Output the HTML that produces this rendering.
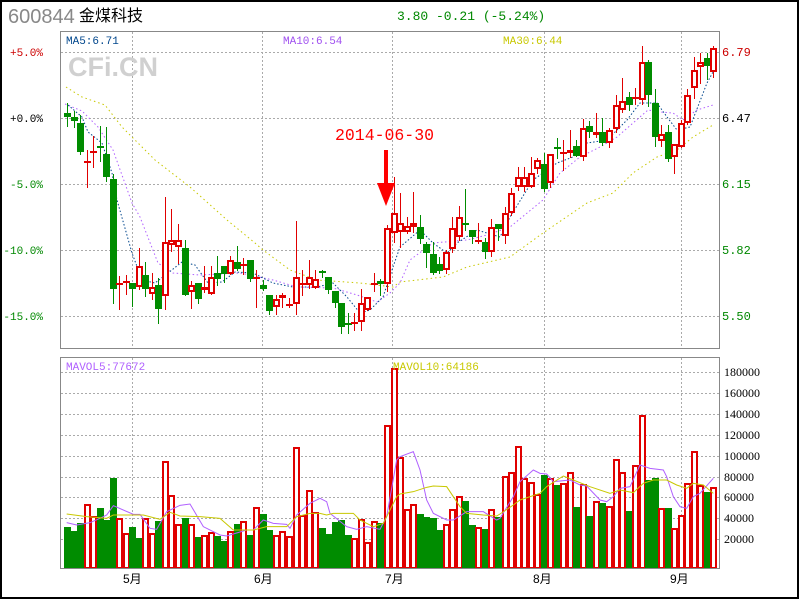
<!DOCTYPE html>
<html><head><meta charset="utf-8">
<style>
html,body{margin:0;padding:0;background:#fff;}
#w{position:relative;width:800px;height:600px;overflow:hidden;}
svg{position:absolute;left:0;top:0;}
#c,#v rect,#c line,#grid{shape-rendering:crispEdges;}
</style></head><body><div id="w">
<svg id="s" width="800" height="600" xmlns="http://www.w3.org/2000/svg">
<rect x="1" y="1" width="797" height="597" fill="#fff" stroke="#000" stroke-width="2"/>
<text x="8" y="23" font-family="Liberation Sans, sans-serif" font-size="20" fill="#888">600844</text>
<text x="79" y="21" font-family="Liberation Sans, 'Noto Sans CJK SC', sans-serif" font-size="16" fill="#000">金煤科技</text>
<text x="397" y="20" font-family="Liberation Mono, monospace" font-size="13" fill="#080">3.80 -0.21 (-5.24%)</text>
<g id="grid" stroke="#aaa" stroke-dasharray="2,2" stroke-width="1"></g>
<text x="68" y="76" font-family="Liberation Sans, sans-serif" font-weight="bold" font-size="27" fill="#d0d0d0">CFi.CN</text>
<g id="ma"></g>
<g id="c"></g>
<g id="v"></g>
<rect x="60.5" y="31.5" width="659" height="317" fill="none" stroke="#888"/>
<rect x="60.5" y="357.5" width="659" height="211" fill="none" stroke="#888"/>
<g font-family="Liberation Mono, monospace" font-size="11">
<text x="66" y="44" fill="#00468c">MA5:6.71</text>
<text x="283" y="44" fill="#a050f0">MA10:6.54</text>
<text x="503" y="44" fill="#c8c800">MA30:6.44</text>
<text x="66" y="370" fill="#b060ff">MAVOL5:77672</text>
<text x="393" y="370" fill="#c8c800">MAVOL10:64186</text>
<g text-anchor="end">
<text x="43" y="56" fill="#c00">+5.0%</text>
<text x="43" y="122" fill="#000">+0.0%</text>
<text x="43" y="188" fill="#080">-5.0%</text>
<text x="43" y="254" fill="#080">-10.0%</text>
<text x="43" y="320" fill="#080">-15.0%</text>
</g>
<g font-size="12">
<text x="722" y="56" fill="#c00">6.79</text>
<text x="722" y="122" fill="#000">6.47</text>
<text x="722" y="188" fill="#080">6.15</text>
<text x="722" y="254" fill="#080">5.82</text>
<text x="722" y="320" fill="#080">5.50</text>
</g>
</g>
<g font-family="Liberation Serif, serif" font-size="12" fill="#000">
<text x="724" y="376">180000</text><text x="724" y="397">160000</text><text x="724" y="418">140000</text>
<text x="724" y="439">120000</text><text x="724" y="460">100000</text><text x="724" y="481">80000</text>
<text x="724" y="501">60000</text><text x="724" y="522">40000</text><text x="724" y="543">20000</text>
</g>
<g font-family="Liberation Sans, 'Noto Sans CJK SC', sans-serif" font-size="12" fill="#000">
<text x="123" y="583">5月</text><text x="254" y="583">6月</text><text x="385" y="583">7月</text>
<text x="533" y="583">8月</text><text x="670" y="583">9月</text>
</g>
<text x="335" y="140" font-family="Liberation Mono, monospace" font-size="16.5" fill="#f00">2014-06-30</text>
<rect x="384" y="150" width="4" height="36" fill="#f00"/>
<polygon points="377,183 395,183 386,206" fill="#f00"/>
</svg>
<script>
var NS="http://www.w3.org/2000/svg";
function el(p,t,a){var e=document.createElementNS(NS,t);for(var k in a)e.setAttribute(k,a[k]);document.getElementById(p).appendChild(e);return e;}
var vx=[132.5,262.5,392.5,544.5,681.5];
vx.forEach(function(x){el("grid","line",{x1:x,y1:32,x2:x,y2:348});el("grid","line",{x1:x,y1:358,x2:x,y2:568});});
[52,118,184,250,316].forEach(function(y){el("grid","line",{x1:61,y1:y+.5,x2:719,y2:y+.5});});
[372,393,414,435,456,477,497,518,539].forEach(function(y){el("grid","line",{x1:61,y1:y+.5,x2:719,y2:y+.5});});
var C=[["g",113,117,103,126],["g",117,121,111,127],["g",123,152,115,154],["r",162,162,150,187],["r",152,152,136,167],["g",146,148,126,161],["g",154,177,127,181],["g",179,289,174,303],["r",284,284,276,309],["r",282,282,275,294],
["g",283,289,283,306],["r",266,287,248,289],["g",275,289,262,296],["r",287,294,273,299],["g",285,309,278,323],["r",242,296,197,309],["r",240,245,209,251],["r",240,247,224,263],["g",248,295,240,295],["r",285,292,281,308],
["g",283,299,283,303],["r",287,290,266,292],["r",277,294,266,294],["g",273,279,256,285],["g",266,274,266,282],["r",260,274,256,274],["g",262,269,246,270],["r",265,265,258,274],["g",260,279,260,281],["r",278,278,270,307],
["g",285,289,280,290],["g",295,311,295,314],["r",299,307,295,314],["r",295,298,293,307],["r",305,305,298,307],["r",277,304,221,314],["r",284,284,270,295],["r",277,285,260,288],["r",279,288,270,288],["g",272,272,270,277],
["g",277,290,277,293],["g",291,303,291,307],["g",303,327,303,333],["g",324,324,313,333],["r",323,323,313,330],["r",303,322,289,330],["r",297,310,297,310],["r",284,284,273,291],["g",281,284,279,295],["r",228,284,225,291],
["r",213,233,177,242],["r",223,232,193,247],["r",226,232,217,233],["r",223,227,192,232],["g",227,239,215,243],["g",244,253,242,267],["g",254,273,242,274],["g",264,271,257,273],["r",252,270,250,273],["r",228,249,217,252],
["r",217,237,206,240],["g",223,225,189,230],["g",230,237,230,243],["r",241,241,223,243],["g",242,252,238,258],["r",227,252,219,256],["g",224,229,224,240],["r",213,236,207,243],["r",193,213,188,215],["r",177,187,167,190],
["r",177,187,167,191],["r",173,187,157,187],["r",160,169,158,173],["g",164,189,153,191],["r",154,183,154,187],["g",148,148,138,158],["r",153,153,140,170],["r",150,153,130,157],["g",146,156,140,156],["r",128,157,119,160],
["g",126,132,121,137],["r",132,135,113,137],["g",132,143,118,145],["r",130,143,128,147],["r",105,129,95,132],["r",101,110,78,112],["g",97,105,92,110],["r",98,98,88,104],["r",62,100,46,104],["g",62,95,60,106],
["g",103,137,89,146],["r",134,141,125,146],["g",132,159,125,161],["r",144,157,144,173],["r",123,147,120,147],["r",95,123,89,124],["r",70,88,57,98],["r",62,67,53,83],["g",58,66,53,79],["r",48,72,46,77]];
var G="#008c00",R="#e00000";
C.forEach(function(c,i){var xi=Math.round(67+6.53*i);var col=c[0]=="g"?G:R;
 el("c","rect",{x:xi,y:c[3],width:1,height:c[4]-c[3]+1,fill:col});
 if(c[2]-c[1]<2){el("c","rect",{x:xi-3,y:c[1]-1,width:7,height:2,fill:col});}
 else if(c[0]=="g"){el("c","rect",{x:xi-3,y:c[1],width:7,height:c[2]-c[1],fill:G});}
 else{el("c","rect",{x:xi-3,y:c[1],width:7,height:c[2]-c[1],fill:R});
  if(c[2]-c[1]>3)el("c","rect",{x:xi-1,y:c[1]+2,width:3,height:c[2]-c[1]-4,fill:"#fff"});}
});
var V1=[["g",531],["g",543],["g",519],["r",463],["r",499],["g",474],["g",509],["g",384],["r",505],["r",550],["g",531],["g",564],["r",505],["r",550],["g",513],["r",334],["r",436],["r",523],["g",505],["r",523],["g",561],["r",556],["r",547],["g",558],["g",573],["r",544],["g",522],["r",514],["g",555],["r",472],["g",492],["g",540],["r",556],["r",544],["r",559],["r",292],["r",496],["r",421],["r",486],["g",534],["g",552],["g",516],["g",510],["g",555],["r",565],["r",508],["r",577],["r",514],["g",520],["r",226],["r",55]];
var V2=[["r",320],["r",478],["r",463],["g",492],["g",501],["g",505],["g",540],["r",523],["r",478],["r",438],["g",453],["g",525],["r",532],["g",537],["r",478],["g",500],["r",379],["r",367],["r",289],["r",384],["r",397],["r",432],["g",375],["r",385],["g",405],["r",399],["r",367],["g",471],["r",402],["g",498],["r",454],["g",459],["r",468],["r",328],["r",367],["g",483],["r",346],["r",196],["g",390],["g",384],["r",475],["g",475],["r",535],["r",496],["r",400],["r",304],["r",405],["g",425],["r",412]];
V1.concat(V2).forEach(function(v,i){var xi=Math.round(67+6.53*i);var y=Math.round(350+v[1]/3);
 if(v[0]=="g")el("v","rect",{x:xi-3,y:y,width:7,height:569-y,fill:G});
 else{el("v","rect",{x:xi-3,y:y,width:7,height:569-y,fill:R});
  el("v","rect",{x:xi-1,y:y+2,width:3,height:565-y,fill:"#fff"});}});
function pl(pts,col,dash,w){el("ma","polyline",{points:pts.map(function(p){return p.join(",")}).join(" "),fill:"none",stroke:col,"stroke-width":w||1,"stroke-dasharray":dash||"none"});}
pl([[66,87],[82,97],[105,105],[122,127],[145,150],[155,160],[190,187],[227,220],[255,243],[263,250],[290,270],[317,280],[360,283],[393,287],[400,282],[443,277],[467,267],[510,257],[543,233],[587,203],[613,193],[633,173],[657,157],[677,150],[693,137],[713,125]],"#c8c800","1.5,3");
pl([[65,104],[82,111],[98,127],[113,150],[132,203],[140,217],[158,263],[173,273],[200,275],[240,273],[273,280],[297,287],[333,288],[357,295],[377,302],[390,293],[400,283],[410,260],[433,243],[467,240],[487,235],[510,227],[543,200],[560,173],[580,157],[600,147],[617,137],[640,117],[648,110],[660,112],[673,113],[683,120],[697,110],[713,105]],"#b060ff","1.5,2.5");
pl([[68,105],[82,117],[88,132],[102,143],[112,173],[117,200],[132,253],[142,280],[155,283],[168,273],[182,262],[195,265],[208,283],[222,282],[235,272],[253,273],[273,283],[293,287],[317,287],[333,283],[347,297],[360,313],[370,310],[383,297],[393,267],[400,247],[420,230],[433,243],[447,253],[457,243],[477,230],[500,237],[510,217],[533,180],[557,163],[573,157],[587,143],[607,140],[627,120],[640,103],[657,103],[667,117],[677,130],[690,127],[707,83],[713,72]],"#00468c","1.5,2");
function vp(a,b,col){var p=a.map(function(q){return [q[0]/3,350+q[1]/3]}).concat(b.map(function(q){return [400+q[0]/3,350+q[1]/3]}));
 el("v","polyline",{points:p.map(function(q){return q.join(",")}).join(" "),fill:"none",stroke:col});}
vp([[200,518],[230,525],[270,518],[300,505],[320,495],[340,467],[400,493],[420,493],[450,535],[470,538],[500,485],[540,466],[570,462],[610,530],[660,555],[680,558],[740,540],[760,540],[790,510],[820,520],[860,523],[870,535],[890,495],[930,460],[960,445],[980,455],[990,490],[1040,530],[1070,538],[1100,530],[1140,538],[1160,500],[1190,330]],
[[0,320],[40,305],[60,360],[80,450],[100,490],[140,510],[160,510],[200,485],[250,485],[290,510],[300,505],[340,440],[360,395],[400,360],[420,370],[440,372],[460,395],[510,390],[540,405],[560,408],[600,450],[620,455],[640,440],[660,415],[690,410],[720,345],[750,355],[790,360],[800,380],[820,440],[840,470],[860,475],[880,440],[900,430],[940,385]],"#b060ff");
vp([[200,492],[260,500],[320,505],[340,495],[400,495],[430,495],[480,508],[510,487],[540,498],[600,500],[660,505],[700,540],[760,540],[800,530],[860,530],[890,500],[930,490],[960,490],[980,495],[1000,490],[1060,490],[1080,510],[1120,530],[1150,520],[1190,440]],
[[0,432],[40,425],[80,412],[100,408],[140,410],[180,470],[200,490],[250,495],[290,498],[300,492],[340,465],[360,450],[420,430],[440,410],[490,378],[520,390],[570,410],[630,430],[660,420],[700,428],[730,400],[760,390],[800,390],[830,405],[860,415],[880,400],[910,405],[940,430]],"#c8c800");
</script>
</div></body></html>
